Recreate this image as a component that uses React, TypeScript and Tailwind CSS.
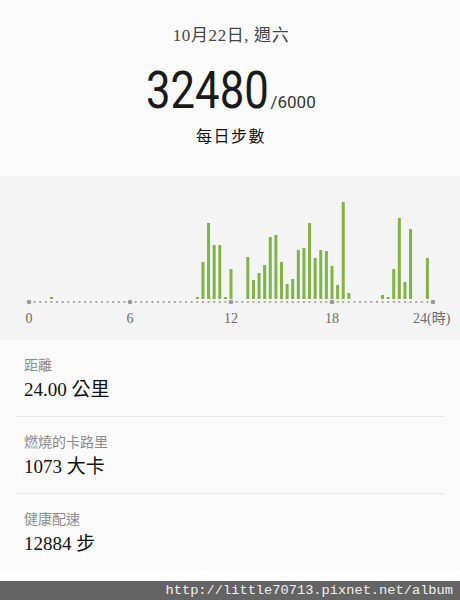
const bars: Record<number, number> = {
  4: 2, 30: 2, 31: 37, 32: 76, 33: 54, 34: 54, 35: 2, 36: 30,
  39: 42, 40: 19, 41: 26, 42: 34, 43: 62, 44: 64, 45: 37, 46: 15, 47: 20,
  48: 49, 49: 51, 50: 76, 51: 41, 52: 49, 53: 48, 54: 33, 55: 14, 56: 97, 57: 6,
  63: 4, 64: 2, 65: 30, 66: 81, 67: 17, 68: 70, 71: 41,
}

const step = 404 / 72
const xAt = (i: number) => 29 + i * step

const StepChart = () => {
  const dots = Array.from({ length: 73 }, (_, i) => i)
  return (
    <svg width="460" height="164" viewBox="0 0 460 164" className="block">
      {Object.entries(bars).map(([i, h]) => (
        <rect key={i} x={xAt(Number(i)) - 1.5} y={123 - h} width="3" height={h} fill="#7fb446" />
      ))}
      {dots.map((i) =>
        i % 18 === 0 ? (
          <circle key={i} cx={xAt(i)} cy="126" r="2.3" fill="#9a9a9a" />
        ) : (
          <rect key={i} x={xAt(i) - 1} y="125" width="2" height="2" fill="#aaaaaa" />
        )
      )}
      <g fill="#6b6b6b" fontSize="14" fontFamily="'Liberation Serif', 'Noto Sans CJK TC', serif">
        <text x="29" y="147" textAnchor="middle">0</text>
        <text x="130" y="147" textAnchor="middle">6</text>
        <text x="231" y="147" textAnchor="middle">12</text>
        <text x="332" y="147" textAnchor="middle">18</text>
        <text x="413" y="147">24(時)</text>
      </g>
    </svg>
  )
}

type RowProps = { label: string, value: string, last?: boolean }
const StatRow = ({ label, value, last }: RowProps) => (
  <div className={`mx-4 h-[77px] px-2 pt-[16px] ${last ? "" : "border-b border-[#e8e8e8]"}`}>
    <p className="text-[14px] leading-[20px] text-[#8c8c8c]">{label}</p>
    <p className="mt-[1px] text-[19px] leading-[26px] text-[#111]">{value}</p>
  </div>
)

export default function App() {
  const serif = "font-['Liberation_Serif','Noto_Sans_CJK_TC',serif]"
  return (
    <div className={`w-[460px] h-[600px] flex flex-col bg-white ${serif}`}>
      <div className="h-[176px] bg-[#fbfbfb] flex flex-col items-center">
        <p className="mt-[24px] pl-[2px] text-[17px] leading-[24px] tracking-[0.6px] text-[#444]">10月22日, 週六</p>
        <div className="mt-[17px] flex items-baseline pl-[2px] font-['Roboto',sans-serif] text-[#1a1a1a]">
          <span className="inline-block w-[124px] whitespace-nowrap origin-left scale-x-[0.84] text-[52px] leading-[52px]">32480</span>
          <span className="ml-[1px] text-[17px] text-[#333] inline-block w-[46px]">/6000</span>
        </div>
        <p className="mt-[8px] pl-[2px] text-[16px] leading-[24px] tracking-[1.5px] text-[#111]">每日步數</p>
      </div>
      <div className="h-[164px] bg-[#f4f4f4]">
        <StepChart />
      </div>
      <div className="h-[230px] bg-[#fafafa]">
        <StatRow label="距離" value="24.00 公里" />
        <StatRow label="燃燒的卡路里" value="1073 大卡" />
        <StatRow label="健康配速" value="12884 步" last />
      </div>
      <div className="h-[11px] bg-white" />
      <div className="h-[19px] bg-[#646464] flex items-center justify-end pr-[7px]">
        <span className="font-['Liberation_Mono',monospace] text-[13.7px] leading-[19px] text-[#f0f0f0]">http://little70713.pixnet.net/album</span>
      </div>
    </div>
  )
}
